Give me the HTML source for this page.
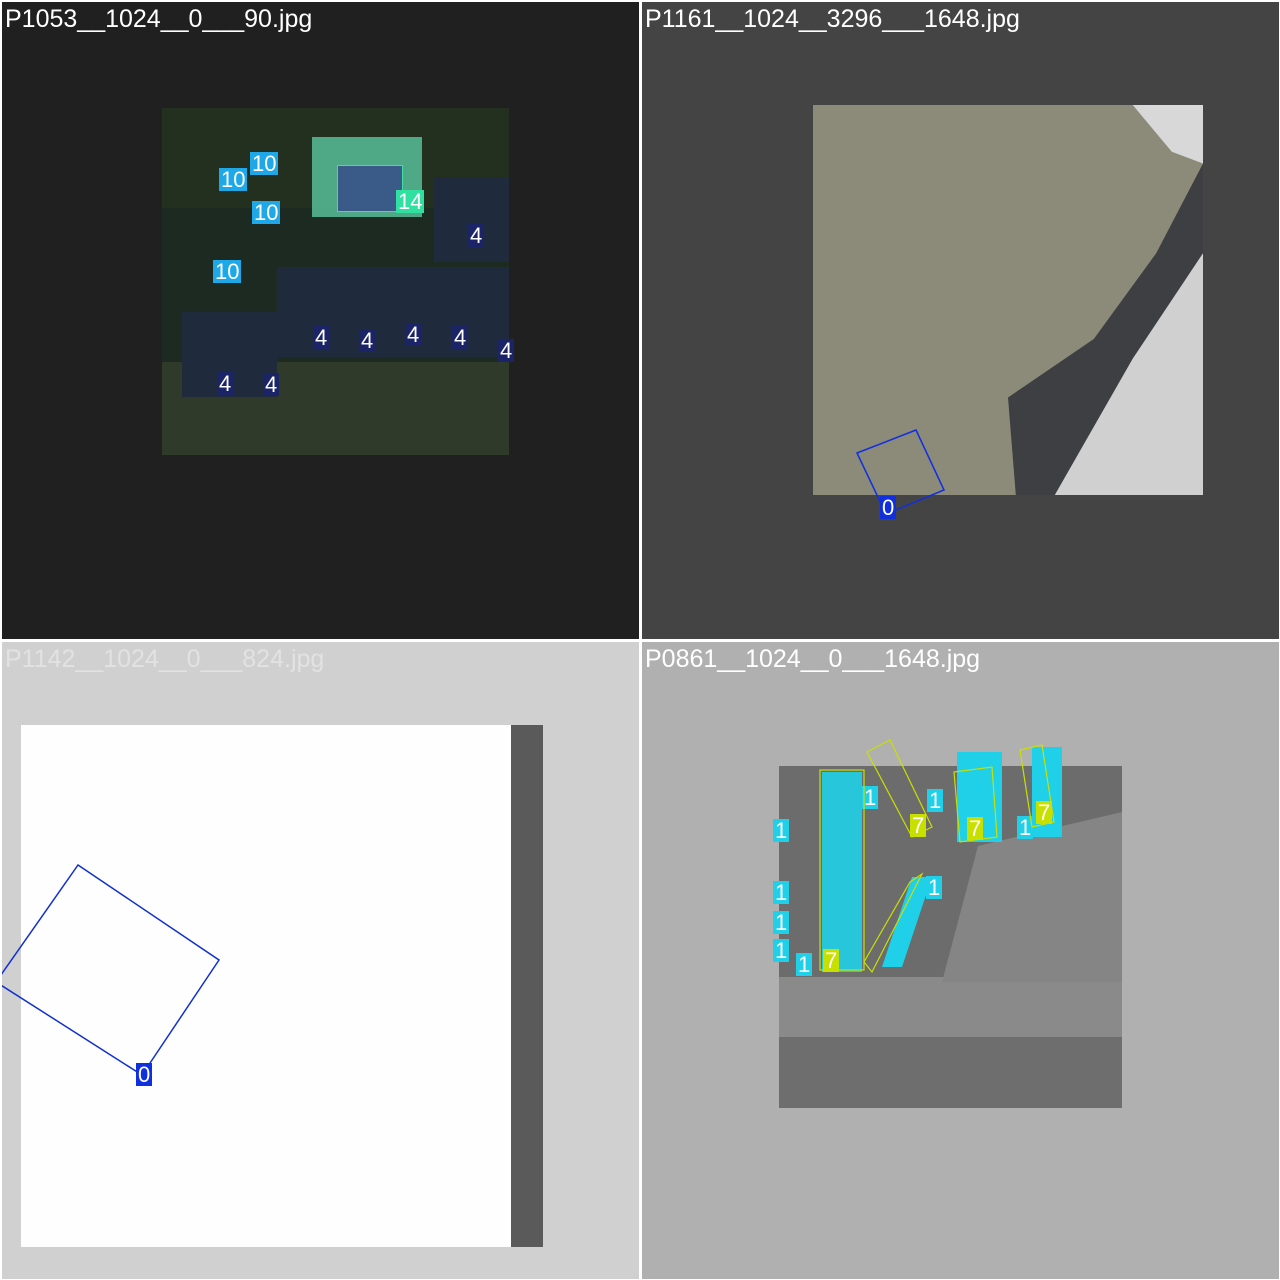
<!DOCTYPE html>
<html><head><meta charset="utf-8"><style>
body{margin:0;width:1280px;height:1280px;background:#fff;position:relative;overflow:hidden;font-family:"Liberation Sans",sans-serif}
.q{position:absolute;width:637px;height:637px;overflow:hidden}
.t{position:absolute;left:3px;top:3px;font-size:25px;color:#fff;white-space:nowrap}
.a{position:absolute}
.l{position:absolute;color:#fff;font-size:22px;line-height:23px;padding:0 2px}
</style></head><body>
<div class="q" style="left:2px;top:2px;background:#202020">
 <div class="a" style="left:160px;top:106px;width:347px;height:347px;background:#1c2a22"></div>
 <div class="a" style="left:160px;top:106px;width:347px;height:100px;background:#23301f"></div>
 <div class="a" style="left:160px;top:360px;width:347px;height:93px;background:#2f3a2a"></div>
 <div class="a" style="left:310px;top:135px;width:110px;height:80px;background:#5bc8a0;opacity:.8"></div>
 <div class="a" style="left:335px;top:163px;width:64px;height:45px;background:#3a5a88;border:1px solid #40e0a0"></div>
 <div class="a" style="left:275px;top:265px;width:232px;height:90px;background:#1f2a3c"></div>
 <div class="a" style="left:180px;top:310px;width:95px;height:85px;background:#1f2a3c"></div>
 <div class="a" style="left:432px;top:175px;width:75px;height:85px;background:#1f2a3c"></div>
 <div class="l" style="left:248px;top:150px;background:#1ea8e8">10</div>
 <div class="l" style="left:217px;top:166px;background:#1ea8e8">10</div>
 <div class="l" style="left:250px;top:199px;background:#1ea8e8">10</div>
 <div class="l" style="left:211px;top:258px;background:#1ea8e8">10</div>
 <div class="l" style="left:394px;top:188px;background:#30e0a0">14</div>
 <div class="l" style="left:466px;top:222px;background:#1c2468">4</div>
 <div class="l" style="left:311px;top:324px;background:#1c2468">4</div>
 <div class="l" style="left:357px;top:327px;background:#1c2468">4</div>
 <div class="l" style="left:403px;top:321px;background:#1c2468">4</div>
 <div class="l" style="left:450px;top:324px;background:#1c2468">4</div>
 <div class="l" style="left:496px;top:337px;background:#1c2468">4</div>
 <div class="l" style="left:215px;top:370px;background:#1c2468">4</div>
 <div class="l" style="left:261px;top:371px;background:#1c2468">4</div>
 <div class="t">P1053__1024__0___90.jpg</div>
</div>
<div class="q" style="left:642px;top:2px;background:#444">
 <div class="a" style="left:171px;top:103px;width:390px;height:390px;background:#8c8a78"></div>
 <div class="a" style="left:171px;top:103px;width:390px;height:390px;background:#3e3f42;clip-path:polygon(100% 15%,100% 38%,76% 100%,52% 100%,50% 75%,72% 60%,88% 38%)"></div>
 <div class="a" style="left:171px;top:103px;width:390px;height:390px;background:#d0d0d0;clip-path:polygon(100% 38%,100% 100%,62% 100%,82% 65%)"></div>
 <div class="a" style="left:171px;top:103px;width:390px;height:390px;background:#d8d8d8;clip-path:polygon(82% 0,100% 0,100% 15%,92% 12%)"></div>
 <svg class="a" style="left:0;top:0" width="637" height="637"><polygon points="215,451 274,428 302,488 244,512" fill="none" stroke="#1030e0" stroke-width="1.5"/></svg>
 <div class="l" style="left:238px;top:494px;background:#1030e0">0</div>
 <div class="t">P1161__1024__3296___1648.jpg</div>
</div>
<div class="q" style="left:2px;top:642px;background:#d0d0d0">
 <div class="a" style="left:19px;top:83px;width:500px;height:522px;background:#fefefe"></div>
 <div class="a" style="left:509px;top:83px;width:32px;height:522px;background:#5a5a5a"></div>
 <svg class="a" style="left:0;top:0" width="637" height="637"><polygon points="76,223 217,318 140,433 -6,340" fill="none" stroke="#1030d0" stroke-width="1.5"/></svg>
 <div class="l" style="left:134px;top:421px;background:#1030e0">0</div>
 <div class="t" style="color:#e2e2e2">P1142__1024__0___824.jpg</div>
</div>
<div class="q" style="left:642px;top:642px;background:#b0b0b0">
 <div class="a" style="left:137px;top:124px;width:343px;height:342px;background:#6c6c6c"></div>
 <div class="a" style="left:137px;top:335px;width:343px;height:60px;background:#8a8a8a"></div>
 <div class="a" style="left:137px;top:395px;width:343px;height:71px;background:#6e6e6e"></div>
 <div class="a" style="left:300px;top:170px;width:180px;height:170px;background:#858585;clip-path:polygon(20% 20%,100% 0,100% 100%,0 100%)"></div>
 <div class="a" style="left:180px;top:130px;width:40px;height:200px;background:#20d0e8;opacity:.9"></div>
 <div class="a" style="left:315px;top:110px;width:45px;height:90px;background:#20d0e8"></div>
 <div class="a" style="left:390px;top:105px;width:30px;height:90px;background:#20d0e8"></div>
 <div class="a" style="left:240px;top:235px;width:50px;height:90px;background:#20d0e8;clip-path:polygon(60% 0,100% 0,40% 100%,0 100%)"></div>
 <div class="l" style="left:131px;top:177px;background:#20d0e8">1</div>
 <div class="l" style="left:131px;top:239px;background:#20d0e8">1</div>
 <div class="l" style="left:131px;top:269px;background:#20d0e8">1</div>
 <div class="l" style="left:131px;top:297px;background:#20d0e8">1</div>
 <div class="l" style="left:154px;top:311px;background:#20d0e8">1</div>
 <div class="l" style="left:220px;top:144px;background:#20d0e8">1</div>
 <div class="l" style="left:285px;top:147px;background:#20d0e8">1</div>
 <div class="l" style="left:375px;top:174px;background:#20d0e8">1</div>
 <div class="l" style="left:284px;top:234px;background:#20d0e8">1</div>
 <div class="l" style="left:181px;top:307px;background:#c8e000">7</div>
 <div class="l" style="left:268px;top:172px;background:#c8e000">7</div>
 <div class="l" style="left:325px;top:175px;background:#c8e000">7</div>
 <div class="l" style="left:394px;top:159px;background:#c8e000">7</div>
 <svg class="a" style="left:0;top:0" width="637" height="637"><g fill="none" stroke="#c8e000" stroke-width="1.2"><rect x="178" y="128" width="44" height="200"/><polygon points="225,110 248,98 290,185 270,195"/><polygon points="312,130 350,125 355,195 318,200"/><polygon points="378,108 400,103 412,180 390,185"/><polygon points="268,240 280,232 230,330 222,320"/></g></svg>
 <div class="t">P0861__1024__0___1648.jpg</div>
</div>
</body></html>
